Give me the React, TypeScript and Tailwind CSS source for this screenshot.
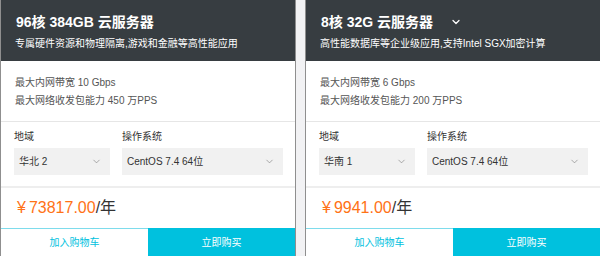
import { ChevronDown } from "lucide-react";

type Plan = {
  title: string;
  desc: string;
  bandwidth: string;
  pps: string;
  region: string;
  price: string;
  menu?: boolean;
};

const plans: Plan[] = [
  {
    title: "96核 384GB 云服务器",
    desc: "专属硬件资源和物理隔离,游戏和金融等高性能应用",
    bandwidth: "最大内网带宽 10 Gbps",
    pps: "最大网络收发包能力 450 万PPS",
    region: "华北 2",
    price: "73817.00",
  },
  {
    title: "8核 32G 云服务器",
    desc: "高性能数据库等企业级应用,支持Intel SGX加密计算",
    bandwidth: "最大内网带宽 6 Gbps",
    pps: "最大网络收发包能力 200 万PPS",
    region: "华南 1",
    price: "9941.00",
    menu: true,
  },
];

function Select({ value, className }: { value: string; className?: string }) {
  return (
    <div className={`h-[27px] bg-[#f1f1f1] flex items-center justify-between pl-[5px] pr-[8px] text-[10px] text-[#333] ${className ?? ""}`}>
      <span>{value}</span>
      <ChevronDown className="w-[11px] h-[11px] text-[#777]" strokeWidth={1.3} />
    </div>
  );
}

function PlanCard({ plan }: { plan: Plan }) {
  return (
    <div className="w-[296px] shrink-0 flex flex-col bg-white border-x border-[#8f8f8f]">
      <div className="h-[61px] bg-[#373d41] px-[14px] pt-[13px] text-white">
        <div className="flex items-center leading-[18px]">
          <span className="text-[14px] font-bold pl-[1px]">{plan.title}</span>
          {plan.menu && <ChevronDown className="ml-[17px] w-[12px] h-[12px]" strokeWidth={2.5} />}
        </div>
        <div className="mt-[4px] text-[10px] leading-[18px]">{plan.desc}</div>
      </div>

      <div className="h-[61px] px-[14px] pt-[13px] text-[10px] leading-[18px] text-[#555] border-b border-[#e6e6e6]">
        <div>{plan.bandwidth}</div>
        <div>{plan.pps}</div>
      </div>

      <div className="flex gap-[12px] pl-[13px] pr-[12px] pt-[7px] pb-[11px] border-b-2 border-[#eeeeee]">
        <div className="w-[96px]">
          <div className="text-[10px] leading-[16px] text-[#333] mb-[3px]">地域</div>
          <Select value={plan.region} />
        </div>
        <div className="flex-1">
          <div className="text-[10px] leading-[16px] text-[#333] mb-[3px]">操作系统</div>
          <Select value="CentOS 7.4 64位" />
        </div>
      </div>

      <div className="h-[40px] flex items-center px-[16px] text-[16px]">
        <span className="text-[#ff7216] mr-[3px]">¥</span>
        <span className="text-[#ff7216]">{plan.price}</span>
        <span className="text-[#333]">/年</span>
      </div>

      <div className="h-[28px] flex text-[10px]">
        <button className="flex-1 bg-white border-t border-[#7edcec] text-[#00c1de]">加入购物车</button>
        <button className="flex-1 bg-[#00c1de] text-white">立即购买</button>
      </div>
    </div>
  );
}

export default function App() {
  return (
    <div
      className="w-[600px] h-[256px] overflow-hidden flex gap-[9px] bg-[#f2f2f4]"
      style={{ fontFamily: '"Liberation Sans", "Noto Sans CJK SC", sans-serif' }}
    >
      {plans.map((p) => (
        <PlanCard key={p.title} plan={p} />
      ))}
    </div>
  );
}
